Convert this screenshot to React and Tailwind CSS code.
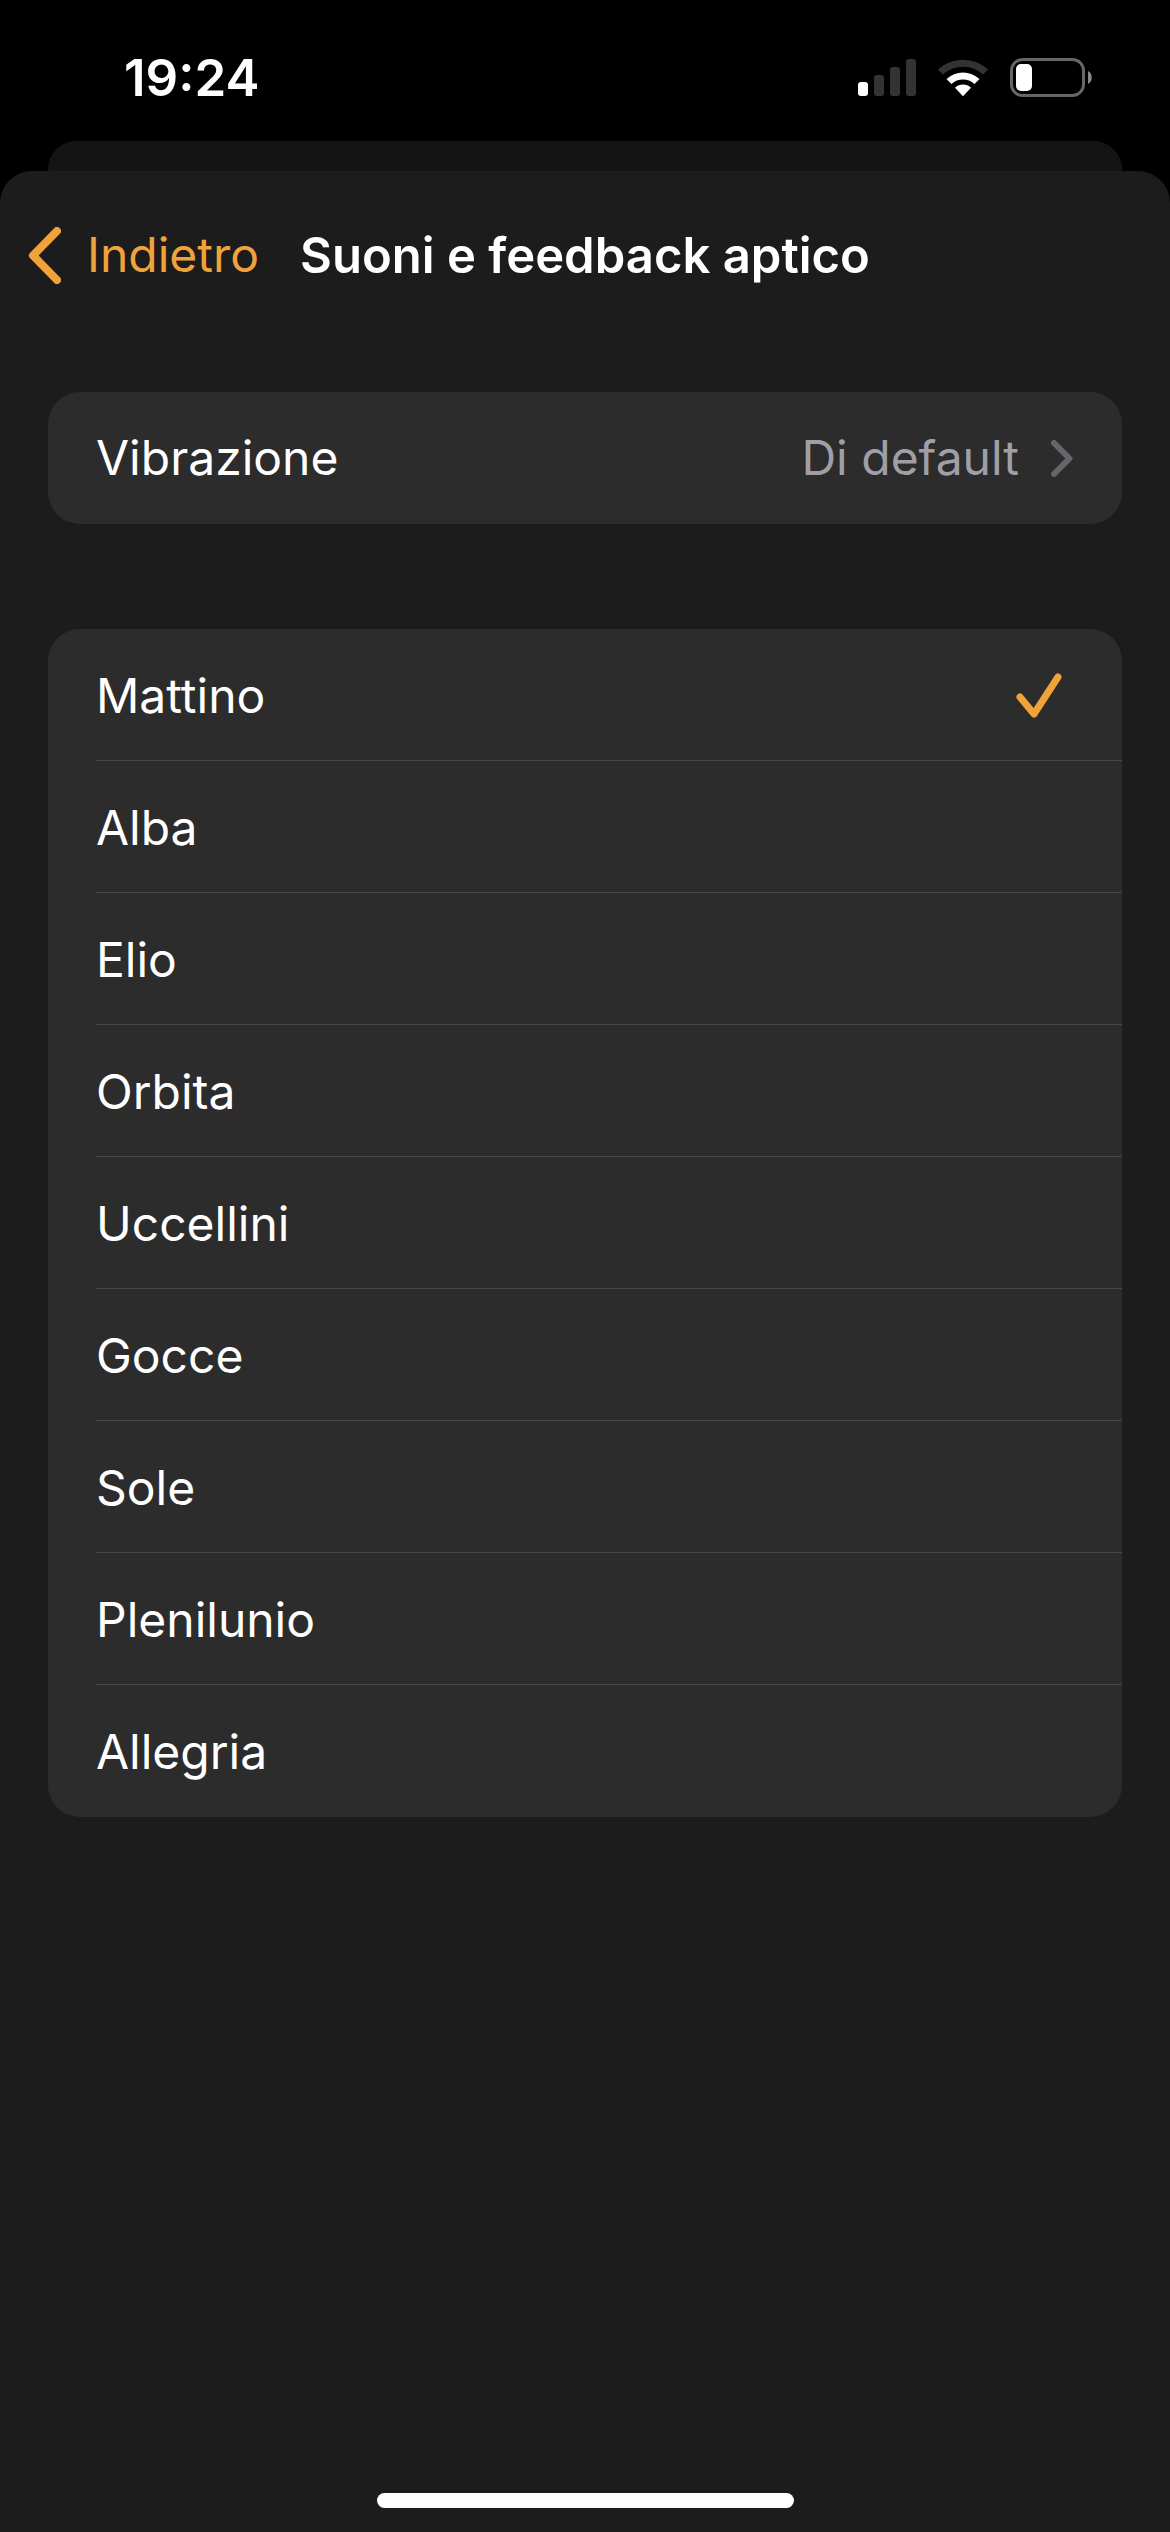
import React, { useState } from "react";

const suoni = [
  "Mattino",
  "Alba",
  "Elio",
  "Orbita",
  "Uccellini",
  "Gocce",
  "Sole",
  "Plenilunio",
  "Allegria",
];

function SignalIcon() {
  return (
    <svg width="58" height="38" viewBox="0 0 58 38" aria-hidden="true">
      <rect x="0" y="23" width="10" height="14" rx="3" fill="#fff" />
      <rect x="16" y="16" width="10" height="21" rx="3" fill="#333" />
      <rect x="32" y="8" width="10" height="29" rx="3" fill="#333" />
      <rect x="48" y="0" width="10" height="37" rx="3" fill="#333" />
    </svg>
  );
}

function WifiIcon() {
  return (
    <svg width="52" height="38" viewBox="0 0 52 38" aria-hidden="true">
      <path d="M0.9 10.6A37 37 0 0 1 51.1 10.6L46.2 15.5A30 30 0 0 0 5.8 15.5Z" fill="#333" />
      <path d="M9.5 20A24 24 0 0 1 42.5 20L37.5 25A17 17 0 0 0 14.5 25Z" fill="#fff" />
      <path d="M18 28.8A11.6 11.6 0 0 1 34 28.8L26 37.2Z" fill="#fff" />
    </svg>
  );
}

function BatteryIcon() {
  return (
    <svg width="82" height="39" viewBox="0 0 82 39" aria-hidden="true">
      <rect x="1.5" y="1.5" width="72" height="36" rx="11" fill="none" stroke="#676767" strokeWidth="3" />
      <rect x="6" y="6" width="16" height="27" rx="5" fill="#fff" />
      <path d="M78 13C83 15.5 83 23.5 78 26Z" fill="#8a8a8a" />
    </svg>
  );
}

function StatusBar() {
  return (
    <div className="flex h-[141px] items-center justify-between pt-[14px] pr-[78px] pl-[124px]">
      <span className="text-[51px] leading-none font-semibold">19:24</span>
      <div className="flex items-center gap-[21px]">
        <SignalIcon />
        <WifiIcon />
        <BatteryIcon />
      </div>
    </div>
  );
}

export default function App() {
  const [selezionato, setSelezionato] = useState("Mattino");

  return (
    <div className="flex min-h-screen flex-col bg-black font-['Inter',sans-serif] text-[48px] leading-none text-white">
      <StatusBar />

      {/* Foglio sottostante */}
      <div className="mx-12 h-[30px] rounded-t-[28px] bg-[#141414]"></div>

      <div className="flex flex-1 flex-col rounded-t-[32px] bg-[#1c1c1c]">
        <header className="grid h-[168px] grid-cols-[1fr_auto_1fr] items-center">
          <button type="button" className="flex items-center gap-[26px] pl-7 text-[#f0a33a]">
            <svg width="33" height="57" viewBox="0 0 33 57" className="shrink-0" aria-hidden="true">
              <path d="M29 4L5 28.5L29 53" fill="none" stroke="currentColor" strokeWidth="8" strokeLinecap="round" strokeLinejoin="round" />
            </svg>
            Indietro
          </button>
          <h1 className="text-[49px] leading-none font-semibold whitespace-nowrap">Suoni e feedback aptico</h1>
        </header>

        <main className="flex flex-1 flex-col gap-[105px] px-12 pt-[53px]">
          <button type="button" className="flex h-[132px] items-center rounded-[32px] bg-[#2c2c2c] pr-[49px] pl-12">
            Vibrazione
            <span className="ml-auto text-[#a09fa6]">Di default</span>
            <svg width="22" height="37" viewBox="0 0 22 37" className="ml-8" aria-hidden="true">
              <path d="M3 3L18.5 18.5L3 34" fill="none" stroke="#66666a" strokeWidth="6" strokeLinecap="round" strokeLinejoin="round" />
            </svg>
          </button>

          <fieldset aria-label="Suoneria" className="overflow-hidden rounded-[32px] bg-[#2c2c2c] pl-12">
            {suoni.map((nome) => (
              <label
                key={nome}
                className="flex h-[132px] items-center justify-between border-b border-[#454545] pt-[2px] pr-[60px] last:border-b-0"
              >
                <input
                  type="radio"
                  name="suono"
                  value={nome}
                  checked={selezionato === nome}
                  onChange={() => setSelezionato(nome)}
                  className="sr-only"
                />
                {nome}
                {selezionato === nome && (
                  <svg width="46" height="45" viewBox="0 0 46 45" aria-hidden="true">
                    <path d="M4 24L18 41L42 4" fill="none" stroke="#f0a33a" strokeWidth="7" strokeLinecap="round" strokeLinejoin="round" />
                  </svg>
                )}
              </label>
            ))}
          </fieldset>
        </main>

        {/* Indicatore home */}
        <div className="mx-auto mb-6 h-[15px] w-[417px] rounded-full bg-white"></div>
      </div>
    </div>
  );
}
